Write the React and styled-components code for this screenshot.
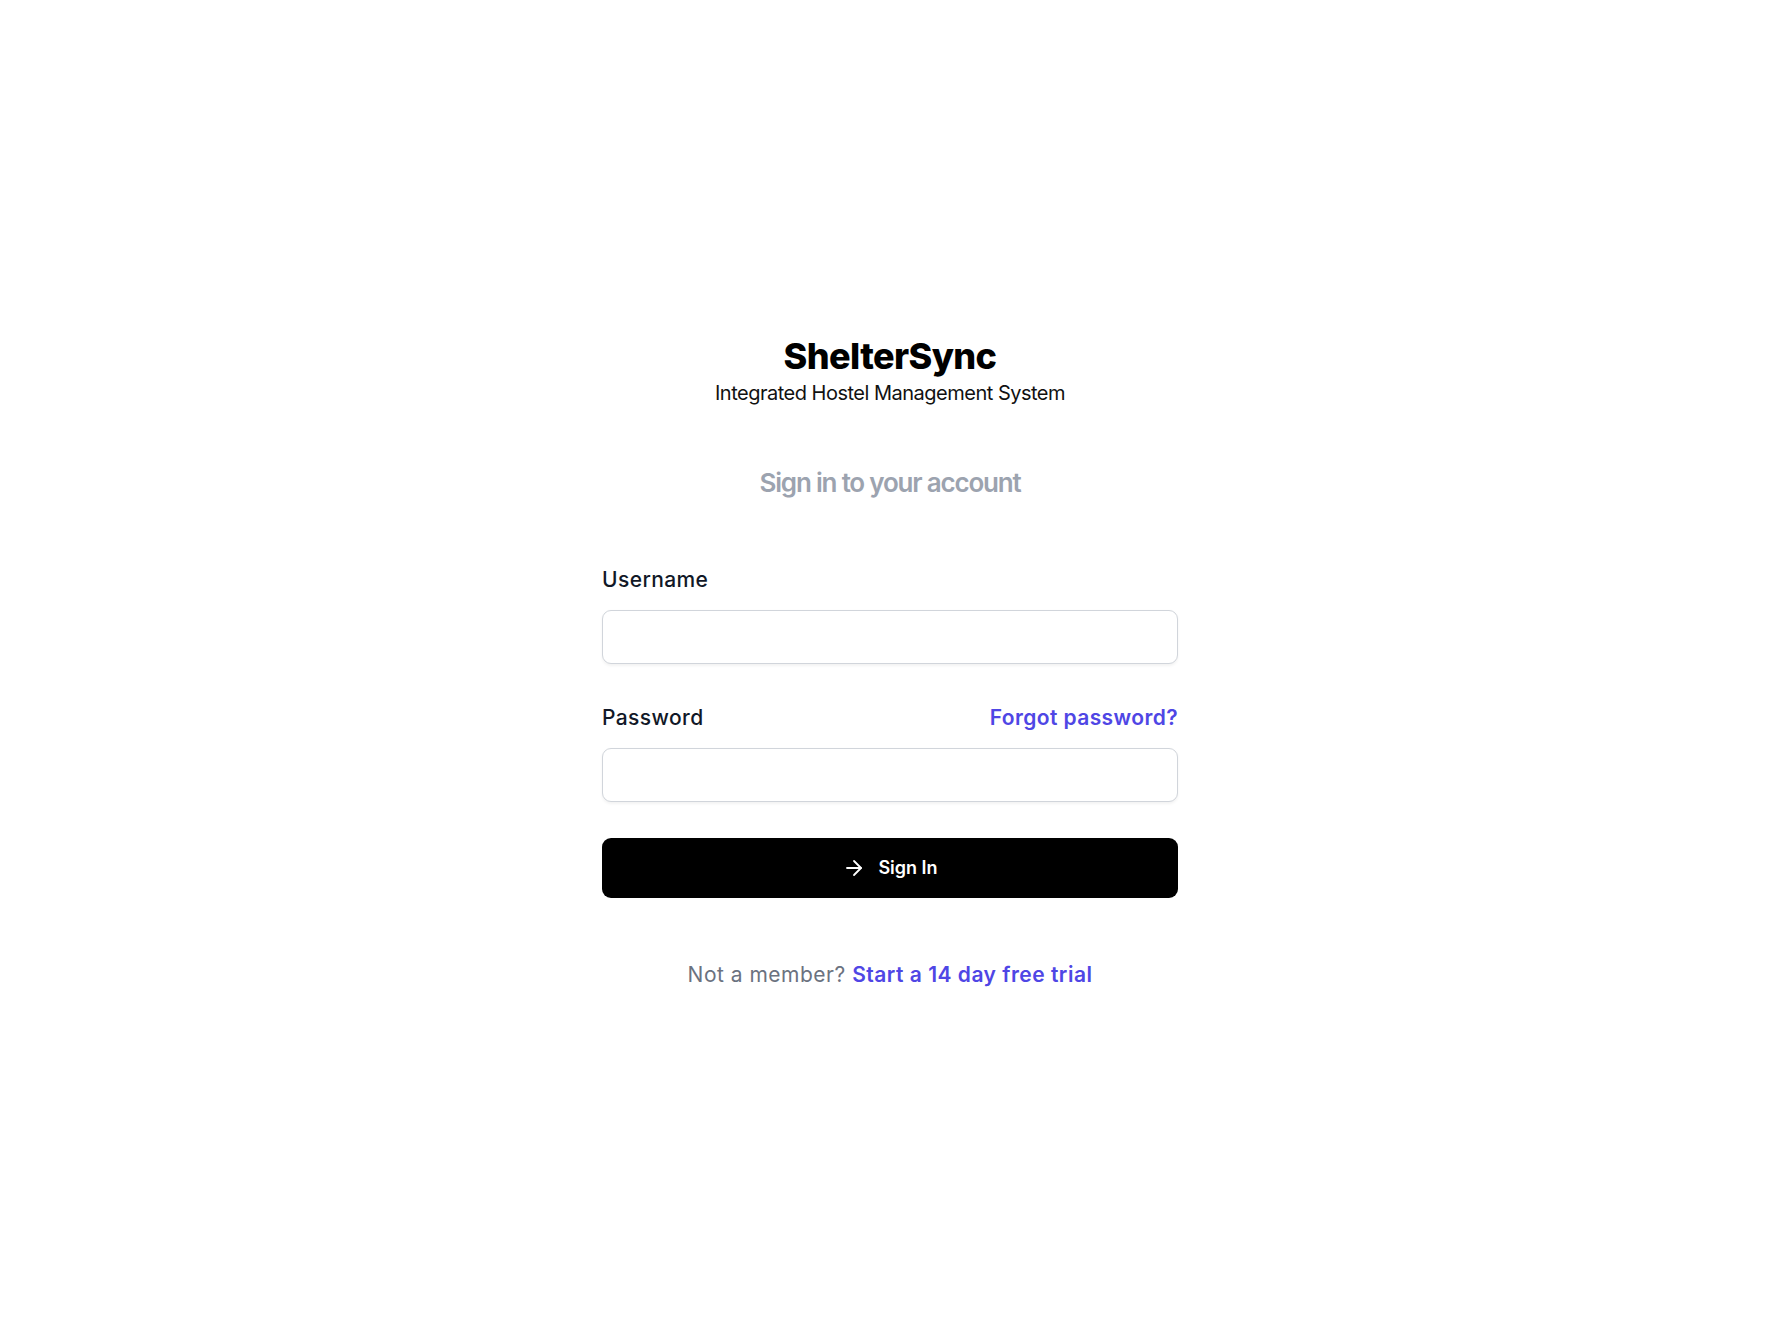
import React from 'react'
import styled, { createGlobalStyle } from 'styled-components'

const GlobalStyle = createGlobalStyle`
    * {
        box-sizing: border-box;
    }
    html, body {
        margin: 0;
        padding: 0;
        background: #ffffff;
    }
    body {
        font-family: Inter, "Noto Sans", "DejaVu Sans", sans-serif;
        color: #111827;
    }
`

const Page = styled.div`
    min-height: 100vh;
    display: flex;
    flex-direction: column;
    justify-content: center;
    align-items: center;
    padding: 0 0 12px 6px;
`

const Brand = styled.div`
    display: flex;
    flex-direction: column;
    align-items: center;
`

const Logo = styled.h1`
    margin: 0;
    font-size: 36px;
    line-height: 44px;
    font-weight: 800;
    letter-spacing: -0.6px;
    color: #000000;
`

const Tagline = styled.p`
    margin: 0;
    font-size: 20px;
    line-height: 30px;
    font-weight: 400;
    letter-spacing: -0.5px;
    color: #111111;
`

const Heading = styled.h2`
    margin: 54px 0 0;
    font-size: 26px;
    line-height: 42px;
    font-weight: 600;
    letter-spacing: -1.2px;
    color: #9ca3af;
    text-align: center;
`

const Panel = styled.div`
    width: 576px;
    margin-top: 58px;
`

const Form = styled.form`
    display: flex;
    flex-direction: column;
    gap: 36px;
`

const Field = styled.div`
    display: flex;
    flex-direction: column;
    gap: 12px;
`

const LabelRow = styled.div`
    display: flex;
    align-items: center;
    justify-content: space-between;
`

const Label = styled.label`
    display: block;
    font-size: 21px;
    line-height: 36px;
    font-weight: 500;
    letter-spacing: 0.4px;
    color: #111827;
`

const TextLink = styled.a`
    font-size: 21px;
    line-height: 36px;
    font-weight: 600;
    letter-spacing: 0.4px;
    color: #4f46e5;
    text-decoration: none;
    cursor: pointer;
`

const Input = styled.input`
    display: block;
    width: 100%;
    height: 54px;
    padding: 0 15px;
    border: 1.5px solid #d1d5db;
    border-radius: 9px;
    box-shadow: 0 1.5px 3px rgba(0, 0, 0, 0.05);
    font-family: inherit;
    font-size: 21px;
    color: #111827;
    outline: none;
`

const Button = styled.button`
    display: flex;
    align-items: center;
    justify-content: center;
    gap: 12px;
    width: 100%;
    height: 60px;
    border: none;
    border-radius: 9px;
    background: #000000;
    color: #ffffff;
    font-family: inherit;
    font-size: 18px;
    font-weight: 600;
    cursor: pointer;
`

const Footer = styled.p`
    margin: 62px 0 0;
    text-align: center;
    font-size: 21px;
    line-height: 30px;
    letter-spacing: 0.5px;
    color: #6b7280;
`

const FooterLink = styled(TextLink)`
    line-height: 30px;
    letter-spacing: 0.5px;
`

function ArrowIcon() {
    return (
        <svg width="24" height="24" viewBox="0 0 24 24" fill="none" stroke="currentColor"
            strokeWidth="1.8" strokeLinecap="round" strokeLinejoin="round">
            <path d="M5 12h14" />
            <path d="m12 5 7 7-7 7" />
        </svg>
    )
}

export default function App() {
    return (
        <>
            <GlobalStyle />
            <Page>
                <Brand>
                    <Logo>ShelterSync</Logo>
                    <Tagline>Integrated Hostel Management System</Tagline>
                </Brand>
                <Heading>Sign in to your account</Heading>
                <Panel>
                    <Form onSubmit={(e) => e.preventDefault()}>
                        <Field>
                            <Label htmlFor="username">Username</Label>
                            <Input id="username" type="text" />
                        </Field>
                        <Field>
                            <LabelRow>
                                <Label htmlFor="password">Password</Label>
                                <TextLink>Forgot password?</TextLink>
                            </LabelRow>
                            <Input id="password" type="password" />
                        </Field>
                        <Button type="submit">
                            <ArrowIcon />
                            Sign In
                        </Button>
                    </Form>
                    <Footer>
                        Not a member? <FooterLink>Start a 14 day free trial</FooterLink>
                    </Footer>
                </Panel>
            </Page>
        </>
    )
}
